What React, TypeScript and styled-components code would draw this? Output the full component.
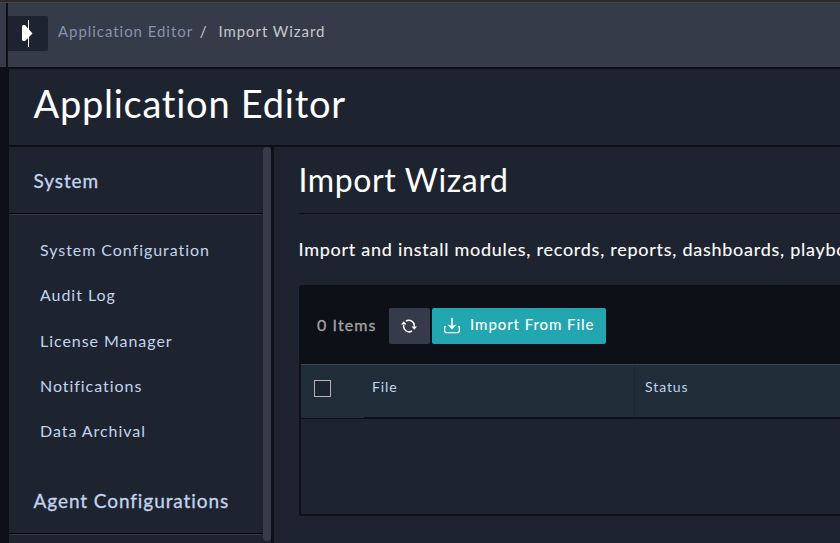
import React from 'react';
import styled, { createGlobalStyle } from 'styled-components';

const c = {
  ink: '#0d1117',
  panel: '#1d2430',
  slate: '#353b48',
  head: '#212c39',
  teal: '#22a6b0',
  link: '#c3d3ee',
};

const GlobalStyle = createGlobalStyle`
  * { box-sizing: border-box; }
  html, body { margin: 0; height: 100%; overflow: hidden; background: ${c.ink}; }
  body { font-family: Lato, "Liberation Sans", sans-serif; color: #fff; }
  #root { height: 100%; }
  h1, h2, h3, p, ul { margin: 0; padding: 0; font-weight: 400; white-space: nowrap; }
`;

const Page = styled.div`
  height: 543px;
  display: flex;
  flex-direction: column;
  overflow: hidden;
`;

const TopBar = styled.header`
  flex: none;
  height: 69px;
  display: flex;
  align-items: flex-start;
  background: ${c.slate};
  border-top: 2px solid #2a2a2a;
  border-bottom: 2px solid ${c.ink};
  box-shadow: inset 0 1px 0 #464646;
`;

const Rail = styled.div`
  width: 8px;
  height: 65px;
  margin-top: 1px;
  border-right: 2px solid ${c.ink};
`;

const MenuToggle = styled.button`
  width: 40px;
  height: 35px;
  margin: 14px 0 0;
  padding: 0;
  border: 0;
  border-radius: 0 2px 2px 0;
  background: ${c.panel};
  svg { display: block; }
`;

const Crumbs = styled.nav`
  display: flex;
  margin: 19px 0 0 10px;
  font-size: 15px;
  line-height: 20px;
  letter-spacing: 0.95px;
  white-space: pre;
  color: #c6c8cc;
`;

const CrumbLink = styled.a`
  color: #8593ad;
`;

const Slash = styled.span`
  margin: 0 11px 0 6.6px;
`;

const Below = styled.div`
  flex: 1;
  min-height: 0;
  margin-left: 9px;
  display: flex;
  flex-direction: column;
  background: ${c.panel};
`;

const TitleBar = styled.div`
  flex: none;
  height: 78px;
  padding: 11px 0 0 24.5px;
  border-bottom: 2px solid ${c.ink};
`;

const PageTitle = styled.h1`
  font-size: 38px;
  line-height: 46px;
  letter-spacing: 0.75px;
`;

const Columns = styled.div`
  flex: 1;
  min-height: 0;
  display: flex;
`;

const Sidebar = styled.aside`
  flex: none;
  width: 254px;
  overflow: hidden;
`;

const Group = styled.h3<{ $lead: number }>`
  height: ${p => p.$lead + 45}px;
  padding: ${p => p.$lead}px 0 0 24.5px;
  margin-bottom: 1px;
  font-size: 19px;
  line-height: 24px;
  letter-spacing: 0.92px;
  color: ${c.link};
  -webkit-text-stroke: 0.3px currentColor;
  border-bottom: 1px solid #000;
  box-shadow: 0 1px 0 ${c.slate};
`;

const Menu = styled.ul`
  list-style: none;
  padding: 12px 0 0 31px;
  height: 240px;
`;

const MenuItem = styled.li`
  height: 45.25px;
  line-height: 45px;
  font-size: 16px;
  letter-spacing: 0.95px;
  color: ${c.link};
`;

const ScrollThumb = styled.div`
  flex: none;
  width: 8px;
  height: 394px;
  border-radius: 4px;
  background: ${c.slate};
`;

const Main = styled.main`
  flex: 1;
  min-width: 0;
  border-left: 3px solid ${c.ink};
  padding-left: 25px;
  overflow: hidden;
`;

const SectionTitle = styled.h2`
  height: 67px;
  padding-top: 13px;
  font-size: 32px;
  line-height: 40px;
  letter-spacing: 0.62px;
  text-indent: -0.5px;
  border-bottom: 1px solid ${c.ink};
`;

const Intro = styled.p`
  height: 71px;
  padding-top: 23px;
  font-size: 18px;
  line-height: 24px;
  letter-spacing: 0.74px;
  text-indent: -0.5px;
  -webkit-text-stroke: 0.1px currentColor;
`;

const Card = styled.section`
  width: 620px;
  height: 231px;
  border: 2px solid ${c.ink};
  border-radius: 3px;
`;

const Toolbar = styled.div`
  height: 77px;
  display: flex;
  align-items: flex-start;
  padding: 21px 0 0 16px;
  background: ${c.ink};
`;

const Count = styled.span`
  width: 72px;
  font-size: 16px;
  line-height: 34px;
  letter-spacing: 1.1px;
  color: #a3a3a3;
  -webkit-text-stroke: 0.3px currentColor;
  white-space: nowrap;
`;

const Button = styled.button<{ $primary?: boolean }>`
  width: ${p => (p.$primary ? 174 : 41)}px;
  height: 36px;
  margin: 0 2px 0 0;
  padding: 0 0 0 12px;
  display: flex;
  align-items: center;
  gap: 10px;
  border: 0;
  border-radius: 2px;
  background: ${p => (p.$primary ? c.teal : c.slate)};
  color: #fff;
  font: 500 15px/33px Lato, sans-serif;
  letter-spacing: 0.92px;
  white-space: nowrap;
  svg { flex: none; }
  span { height: 36px; }
`;

const HeadRow = styled.div`
  height: 55px;
  display: grid;
  grid-template-columns: 63px 271px 1fr;
  background: ${c.head};
  border-top: 1px solid #35465c;
`;

const Cell = styled.div<{ $pad: number; $rule?: boolean }>`
  padding: 12px 0 0 ${p => p.$pad}px;
  font-size: 14px;
  line-height: 20px;
  letter-spacing: 0.92px;
  color: ${c.link};
  border-bottom: 2px solid ${c.ink};
  border-right: ${p => (p.$rule ? `1px solid #1c2631` : '0')};
`;

const CheckCell = styled.div`
  padding: 15px 0 0 13px;
  border-bottom: 1px solid ${c.ink};
`;

const CheckBox = styled.div`
  width: 17px;
  height: 17px;
  border: 1px solid #b4b4b4;
  background: ${c.panel};
`;

const ToggleIcon = () => (
  <svg width="40" height="35" viewBox="0 0 40 35">
    <path d="M14 10l1-1h2l7.500 8.500L17 25h-2l-1-1z" fill="#fff" />
    <path d="M20.500 4v27" stroke="#fff" strokeWidth="1" />
  </svg>
);

const RefreshIcon = () => (
  <svg width="16" height="14" viewBox="0 0 16 14" fill="none" stroke="#fff" strokeWidth="1.500">
    <path d="M5 2A5.500 5.500 0 0 1 13.200 7.500" />
    <path d="M11 12A5.500 5.500 0 0 1 2.800 6" />
    <path d="M10.500 7.500h5.500l-2.700 3.200zM0 5.500h5.500L2.800 2.300z" fill="#fff" stroke="none" />
  </svg>
);

const DownloadIcon = () => (
  <svg width="16" height="16" viewBox="0 0 16 16" fill="none" stroke="#fff" strokeWidth="1.200">
    <path d="M2 8.700H.7v4a2 2 0 0 0 2 2h10.600a2 2 0 0 0 2-2v-4H14" />
    <path d="M8 0v7" strokeWidth="1.500" />
    <path d="M3.500 6.500l3 .8h3l3-.8L8 11.500z" fill="#fff" stroke="none" />
  </svg>
);

const items = ['System Configuration', 'Audit Log', 'License Manager', 'Notifications', 'Data Archival'];

export default function App() {
  return (
    <Page>
      <GlobalStyle />
      <TopBar>
        <Rail />
        <MenuToggle aria-label="Toggle menu"><ToggleIcon /></MenuToggle>
        <Crumbs>
          <CrumbLink>Application Editor</CrumbLink>
          <Slash>/</Slash>
          <span>Import Wizard</span>
        </Crumbs>
      </TopBar>
      <Below>
        <TitleBar><PageTitle>Application Editor</PageTitle></TitleBar>
        <Columns>
          <Sidebar>
            <Group $lead={22}>System</Group>
            <Menu>{items.map(i => <MenuItem key={i}>{i}</MenuItem>)}</Menu>
            <Group $lead={34}>Agent Configurations</Group>
          </Sidebar>
          <ScrollThumb />
          <Main>
            <SectionTitle>Import Wizard</SectionTitle>
            <Intro>Import and install modules, records, reports, dashboards, playbooks</Intro>
            <Card>
              <Toolbar>
                <Count>0 Items</Count>
                <Button aria-label="Refresh"><RefreshIcon /></Button>
                <Button $primary><DownloadIcon /><span>Import From File</span></Button>
              </Toolbar>
              <HeadRow>
                <CheckCell><CheckBox /></CheckCell>
                <Cell $pad={8} $rule>File</Cell>
                <Cell $pad={10}>Status</Cell>
              </HeadRow>
            </Card>
          </Main>
        </Columns>
      </Below>
    </Page>
  );
}
